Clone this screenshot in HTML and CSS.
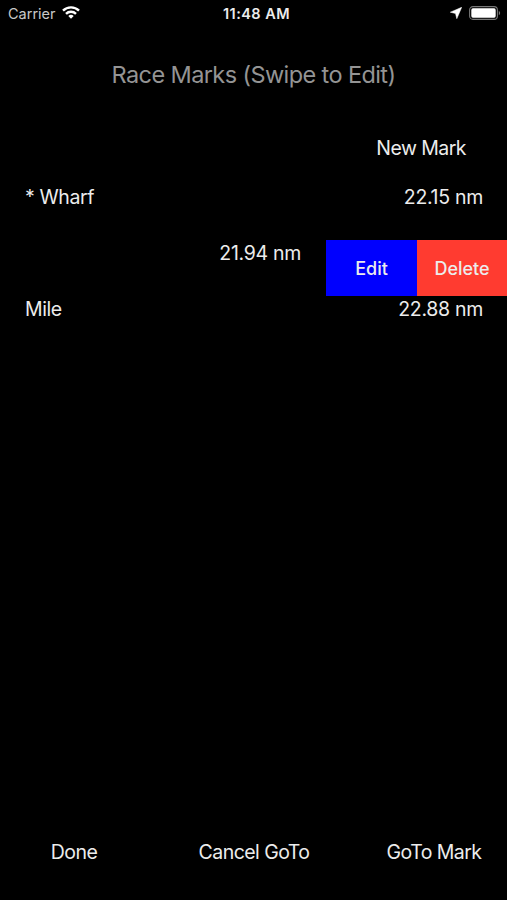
FILE: index.html
```html
<!DOCTYPE html>
<html lang="en">
  <head>
    <meta charset="UTF-8" />
    <meta name="viewport" content="width=device-width, initial-scale=1.0" />
    <title>Race Marks</title>
    <link rel="stylesheet" href="styles.css">
  </head>
  <body>
    <div class="screen">
      <div class="status-bar">
        <div class="status-left">
          <span class="carrier">Carrier</span>
          <svg class="wifi" width="18" height="13" viewBox="0 0 18 13">
            <path d="M1 4.7a11.3 11.3 0 0 1 16 0" />
            <path d="M4 7.9a7 7 0 0 1 10 0" />
            <path class="dot" d="M9 12.8L6.3 10.1a3.9 3.9 0 0 1 5.4 0z" />
          </svg>
        </div>
        <span class="clock">11:48 AM</span>
        <div class="status-right">
          <svg class="location" width="12" height="12" viewBox="0 0 12 12">
            <path d="M11.7.3L6.8 11.7 5.5 6.5.3 5.2z" />
          </svg>
          <svg class="battery" width="32" height="14" viewBox="0 0 32 14">
            <rect class="case" x=".6" y=".6" width="27.8" height="12.8" rx="3.4" />
            <rect x="2.3" y="2.3" width="24.4" height="9.4" rx="1.6" />
            <path class="cap" d="M29.8 4.9c1.8.6 1.8 3.6 0 4.2z" />
          </svg>
        </div>
      </div>

      <h1 class="title">Race Marks (Swipe to Edit)</h1>

      <div class="new-mark">
        <button type="button">New Mark</button>
      </div>

      <div class="marks">
        <div class="mark">
          <span class="name">* Wharf</span>
          <span class="distance">22.15 nm</span>
        </div>
        <div class="mark swiped">
          <span class="distance">21.94 nm</span>
          <button type="button" class="edit">Edit</button>
          <button type="button" class="delete">Delete</button>
        </div>
        <div class="mark">
          <span class="name">Mile</span>
          <span class="distance">22.88 nm</span>
        </div>
      </div>

      <div class="toolbar">
        <button type="button">Done</button>
        <button type="button">Cancel GoTo</button>
        <button type="button">GoTo Mark</button>
      </div>
    </div>
  </body>
</html>
```
FILE: styles.css
```css
* {
  margin: 0;
  padding: 0;
  box-sizing: border-box;
  font-family: "Inter", sans-serif;
}

body {
  background-color: #000;
  color: #ececec;
}

button {
  border: none;
  background: none;
  color: inherit;
  font-size: 19.5px;
  letter-spacing: -0.55px;
  white-space: nowrap;
  cursor: pointer;
}

.screen {
  display: flex;
  flex-direction: column;
  height: 900px;
}

.status-bar {
  display: grid;
  grid-template-columns: 1fr auto 1fr;
  align-items: center;
  height: 27px;
  padding: 0 6px 0 8px;
  font-size: 14.5px;
}

.status-left,
.status-right {
  display: flex;
  align-items: center;
}

.status-left {
  gap: 6px;
}

.status-right {
  justify-content: flex-end;
  gap: 7px;
}

.carrier {
  color: #c8c8c8;
}

.clock {
  padding-left: 4px;
  font-weight: 600;
  letter-spacing: 0.45px;
}

.wifi {
  margin-top: -2px;
  fill: none;
  stroke: #fff;
  stroke-width: 2.4;
}

.wifi .dot {
  fill: #fff;
  stroke: none;
}

.location,
.battery {
  margin-top: -1px;
  fill: #fff;
}

.location {
  stroke: #fff;
  stroke-width: 0.5;
}

.battery .case {
  fill: none;
  stroke: #777;
  stroke-width: 1.1;
}

.battery .cap {
  fill: #777;
}

.title {
  margin-top: 33px;
  color: #949494;
  font-size: 23.5px;
  font-weight: 400;
  letter-spacing: -0.6px;
  line-height: 30px;
  text-align: center;
}

.new-mark {
  display: flex;
  justify-content: flex-end;
  margin-top: 45px;
  padding-right: 41px;
}

.new-mark button {
  height: 26px;
}

.marks {
  margin-top: 23px;
  font-size: 19.5px;
  letter-spacing: -0.4px;
}

.mark {
  display: flex;
  justify-content: space-between;
  height: 56px;
  padding: 0 24px 0 25px;
  line-height: 27px;
}

.mark .distance {
  letter-spacing: -0.3px;
}

/* the actions run to the edge of the screen */
.mark.swiped {
  justify-content: flex-end;
  padding: 0;
}

.swiped .distance {
  margin-right: 25px;
}

.edit,
.delete {
  height: 56px;
  font-size: 18px;
  font-weight: 500;
  letter-spacing: 0;
}

.edit {
  width: 91px;
  background-color: #0000fe;
}

.delete {
  width: 90px;
  background-color: #ff3b30;
}

.toolbar {
  display: flex;
  justify-content: center;
  gap: 60px;
  margin-top: auto;
  padding: 0 0 35px 1px;
}

.toolbar button {
  width: 120px;
  height: 26px;
}
```
